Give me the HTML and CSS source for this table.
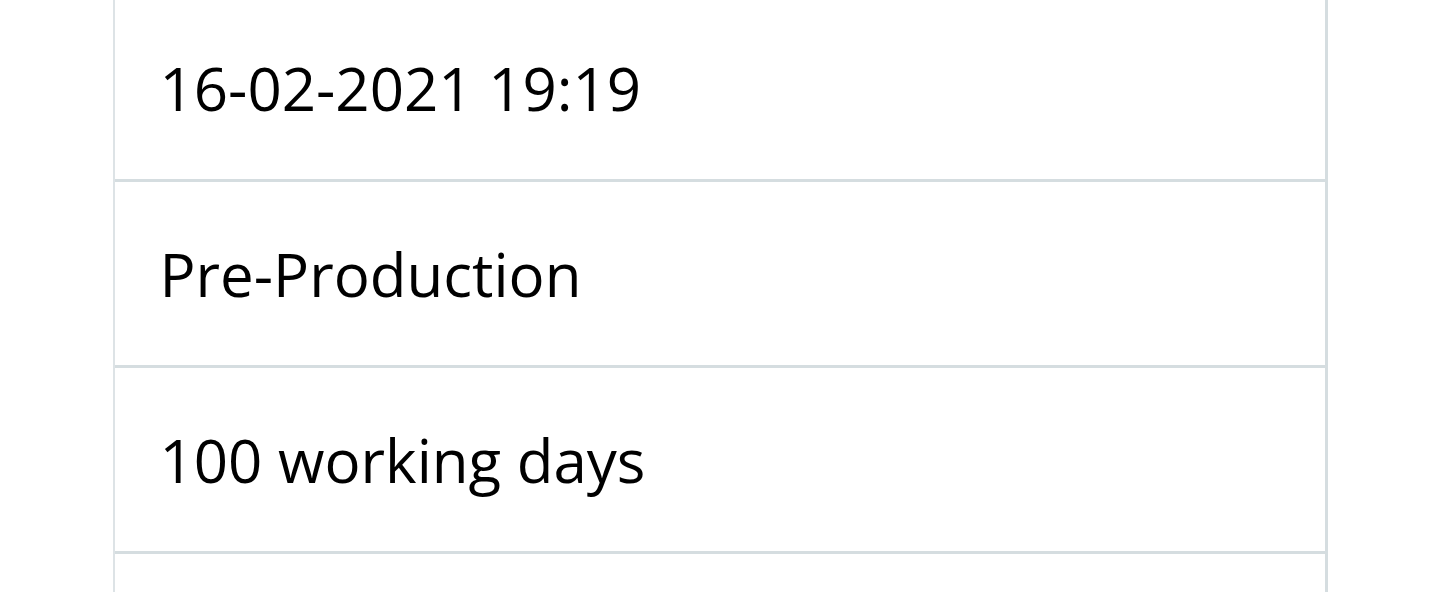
FILE: index.html
```html
<!DOCTYPE html>
<html lang="en">
<head>
<meta charset="utf-8">
<title>Details</title>
<link rel="stylesheet" href="styles.css">
</head>
<body>
<div class="list">
  <div class="row">16-02-2021 19:19</div>
  <div class="row">Pre-Production</div>
  <div class="row">100 working days</div>
  <div class="row">&nbsp;</div>
</div>
</body>
</html>
```
FILE: styles.css
```css
html, body {
  margin: 0;
  padding: 0;
  background: #ffffff;
  overflow: hidden;
}

.list {
  width: 1215px;
  margin: -4px auto 0;
  box-sizing: border-box;
  border-left: 2px solid #dde3e6;
  border-right: 3px solid #d5dde0;
  font-family: "Open Sans", "Noto Sans", sans-serif;
  font-size: 60px;
  color: #000;
}

.row {
  box-sizing: border-box;
  height: 186px;
  padding: 0 0 0 45px;
  display: flex;
  align-items: center;
  border-bottom: 3px solid #d5dde0;
  line-height: 1.5;
}
```
